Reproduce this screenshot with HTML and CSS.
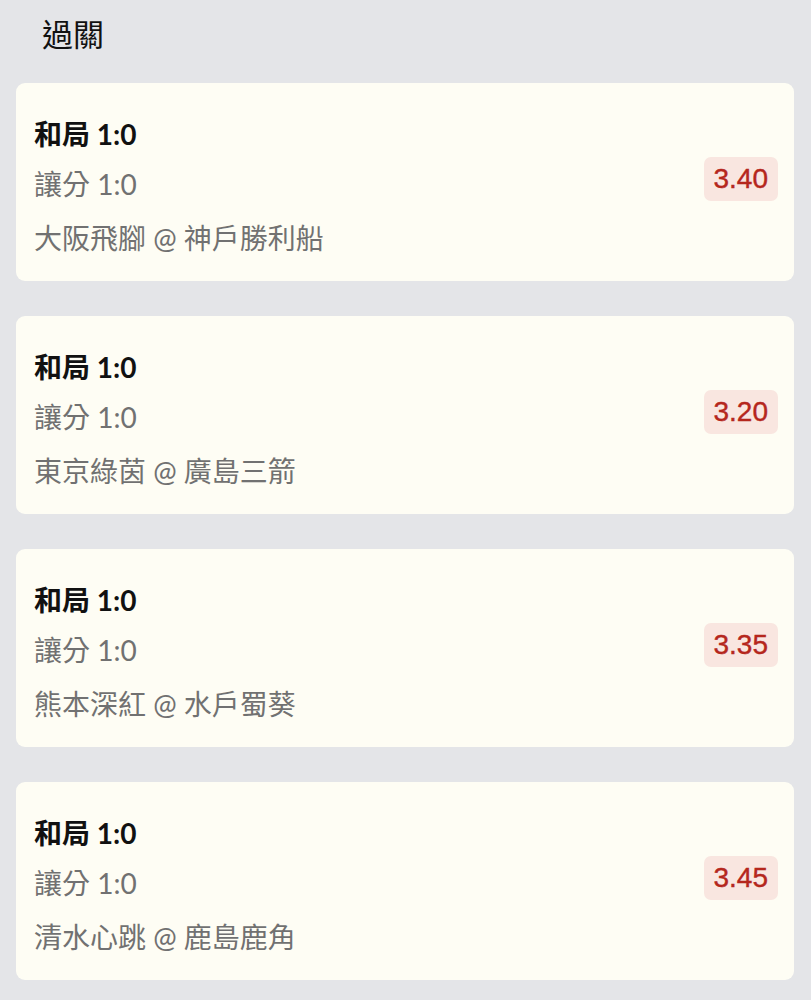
FILE: index.html
```html
<!DOCTYPE html>
<html lang="zh-Hant">
    <head>
        <meta charset="UTF-8" />
        <meta name="viewport" content="width=device-width, initial-scale=1.0" />
        <title>過關</title>
        <link rel="stylesheet" href="styles.css">
    </head>
    <body>
        <main>
            <h1 class="page-title">過關</h1>
            <div class="bet-list">
                <div class="bet">
                    <div class="bet-info">
                        <div class="bet-market">和局 1:0</div>
                        <div class="bet-line">讓分 1:0</div>
                        <div class="bet-match">大阪飛腳 @ 神戶勝利船</div>
                    </div>
                    <span class="bet-odds">3.40</span>
                </div>
                <div class="bet">
                    <div class="bet-info">
                        <div class="bet-market">和局 1:0</div>
                        <div class="bet-line">讓分 1:0</div>
                        <div class="bet-match">東京綠茵 @ 廣島三箭</div>
                    </div>
                    <span class="bet-odds">3.20</span>
                </div>
                <div class="bet">
                    <div class="bet-info">
                        <div class="bet-market">和局 1:0</div>
                        <div class="bet-line">讓分 1:0</div>
                        <div class="bet-match">熊本深紅 @ 水戶蜀葵</div>
                    </div>
                    <span class="bet-odds">3.35</span>
                </div>
                <div class="bet">
                    <div class="bet-info">
                        <div class="bet-market">和局 1:0</div>
                        <div class="bet-line">讓分 1:0</div>
                        <div class="bet-match">清水心跳 @ 鹿島鹿角</div>
                    </div>
                    <span class="bet-odds">3.45</span>
                </div>
            </div>
        </main>
    </body>
</html>
```

FILE: styles.css
```css
* {
    box-sizing: border-box;
}
body {
    margin: 0;
    background-color: #e4e5e8;
    color: #111;
    font-family: Lato, "Noto Sans CJK TC", sans-serif;
}
.page-title {
    margin: 0;
    padding: 14px 42px 0;
    height: 83px;
    font-size: 31px;
    font-weight: normal;
    line-height: 40px;
}
.bet-list {
    display: flex;
    flex-direction: column;
    gap: 35px;
    padding: 0 17px 0 16px;
}
.bet {
    display: flex;
    align-items: center;
    justify-content: space-between;
    padding: 26px 16px 18px 18px;
    border-radius: 9px;
    background-color: #fefdf4;
}
.bet-info {
    font-size: 28px;
    line-height: 50px;
}
.bet-market {
    font-weight: bold;
}
.bet-line,
.bet-match {
    color: #717171;
}
.bet-match {
    margin-top: 4px;
}
.bet-odds {
    margin-top: -14px;
    padding: 0 10px;
    border-radius: 7px;
    background-color: #f9e6e0;
    color: #b5271d;
    font-family: "Liberation Sans", Arial, sans-serif;
    font-size: 28px;
    line-height: 44px;
    -webkit-text-stroke: 0.4px #b5271d;
}
```
